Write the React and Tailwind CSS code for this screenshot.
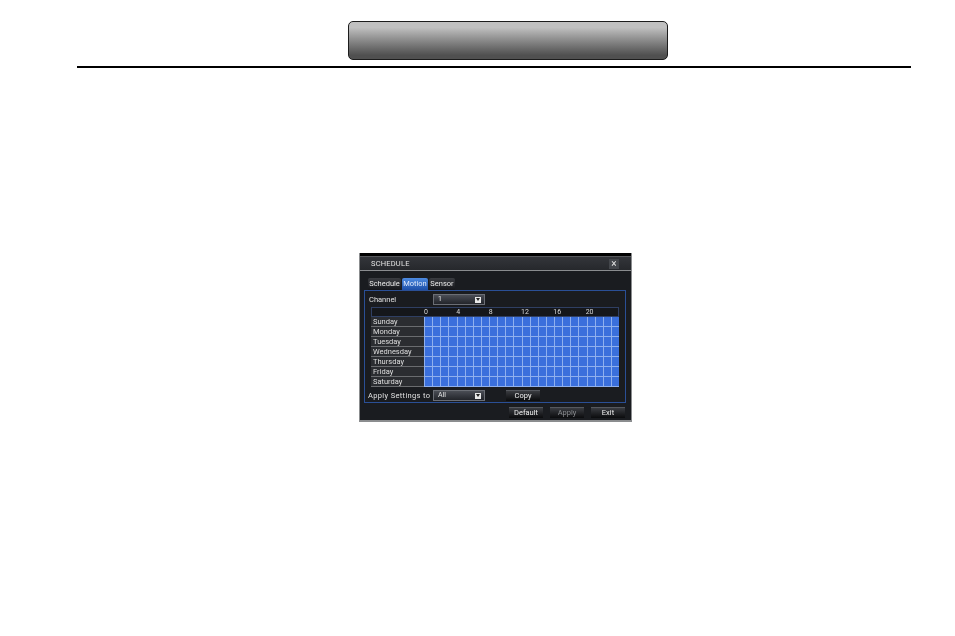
import React from 'react';

const days = ['Sunday', 'Monday', 'Tuesday', 'Wednesday', 'Thursday', 'Friday', 'Saturday'];
const hours = ['0', '4', '8', '12', '16', '20'];
const cells = Array.from({ length: 24 });

// Dropdown used for channel and apply settings
const Select = ({ value }) => (
  <div className="flex h-[11px] w-[52px] items-center justify-between border border-[#6b6e75] bg-gradient-to-b from-[#4a4d55] to-[#23252b] pl-[4px] pr-[3px] text-[7px] leading-none text-[#e4e4e4]">
    <span>{value}</span>
    <span className="flex h-[6px] w-[6px] items-center justify-center bg-[#e8e8e8]">
      <span className="border-x-[2px] border-t-[3px] border-x-transparent border-t-[#222]"></span>
    </span>
  </div>
);

// Small dark dialog button
const Btn = ({ label, dim }) => (
  <div className={`flex h-[11px] w-[34px] items-center justify-center border-t border-[#55585e] bg-gradient-to-b from-[#3a3c41] to-[#0b0c0e] text-[7.5px] leading-none ${dim ? 'text-[#8a8c90]' : 'text-[#f0f0f0]'}`}>
    {label}
  </div>
);

const Tab = ({ label, active, width }) => (
  <div className={`flex h-[12px] items-center justify-center rounded-t-[2px] text-[7.5px] leading-none ${width} ${active ? 'bg-gradient-to-b from-[#4d8ae0] to-[#1d4fa8] text-[#dfe9fb]' : 'bg-gradient-to-b from-[#3a3c41] to-[#15161a] text-[#e8e8e8]'}`}>
    {label}
  </div>
);

const Schedule = () => (
  <div className="flex h-[169px] w-[273px] flex-col border-x border-b-2 border-[#8b8d8f] bg-[#1a1c20] font-['Roboto',sans-serif] blur-[0.35px]">
    <div className="h-[4px] border-b border-[#55575a] bg-black"></div>
    <div className="flex h-[14px] items-center justify-between border-b border-[#8a8c8f] bg-gradient-to-b from-[#33353a] to-[#26282c] pl-[11px] pr-[12px] text-[7.5px] leading-none tracking-[0.2px] text-[#e2e2e2]">
      <span>SCHEDULE</span>
      <span className="flex h-[10px] w-[10px] items-center justify-center bg-[#43464b] text-[10px] leading-none text-[#e8e8e8]">×</span>
    </div>
    <div className="mt-[7px] flex gap-[1px] pl-[8px]">
      <Tab label="Schedule" width="w-[33px]" />
      <Tab label="Motion" width="w-[26px]" active />
      <Tab label="Sensor" width="w-[26px]" />
    </div>
    <div className="ml-[4px] h-[113px] w-[262px] border border-[#2a4f96] pt-[3px]">
      <div className="flex h-[11px] items-center">
        <span className="w-[68px] pl-[4px] text-[7.5px] leading-none text-[#e0e0e0]">Channel</span>
        <Select value="1" />
      </div>
      <div className="ml-[6px] mt-[2px] w-[248px]">
        <div className="flex h-[10px] border border-[#2f3f63] bg-[#15171b]">
          <div className="w-[52px]"></div>
          <div className="grid flex-1 grid-cols-6 text-[7px] leading-[9px] text-[#d8d8d8]">
            {hours.map((h) => (
              <span key={h}>{h}</span>
            ))}
          </div>
        </div>
        <div className="flex">
          <div className="flex w-[53px] flex-col">
            {days.map((d) => (
              <div key={d} className="flex h-[10px] items-center border-b border-[#6a6c6f] bg-[#2b2d31] pl-[2px] pt-[1px] text-[7.5px] leading-none text-[#dedede]">
                {d}
              </div>
            ))}
          </div>
          <div className="flex flex-1 flex-col">
            {days.map((d) => (
              <div key={d} className="grid h-[10px] grid-cols-24 border-b border-[#8fb0ee] bg-[#3a6fdc]">
                {cells.map((_, i) => (
                  <div key={i} className="border-l border-[#8fb0ee]"></div>
                ))}
              </div>
            ))}
          </div>
        </div>
      </div>
      <div className="mt-[3px] flex h-[11px] items-center">
        <span className="w-[68px] whitespace-nowrap pl-[3px] text-[7.5px] leading-none tracking-[0.35px] text-[#e0e0e0]">Apply Settings to</span>
        <Select value="All" />
        <div className="ml-[21px]">
          <Btn label="Copy" />
        </div>
      </div>
    </div>
    <div className="mt-[4px] flex justify-end gap-[7px] pr-[6px]">
      <Btn label="Default" />
      <Btn label="Apply" dim />
      <Btn label="Exit" />
    </div>
  </div>
);

const App = () => (
  <div className="h-[636px] w-[955px] overflow-hidden bg-white">
    <div className="pl-[348px] pt-[21px]">
      <div className="h-[39px] w-[320px] rounded-[5px] border border-[#1c1c1c] bg-gradient-to-b from-[#c0c0c0] from-15% to-[#505050] to-90%"></div>
    </div>
    <div className="ml-[77px] mt-[6px] h-[2px] w-[834px] bg-black"></div>
    <div className="ml-[359px] mt-[185px]">
      <Schedule />
    </div>
  </div>
);

export default App;
